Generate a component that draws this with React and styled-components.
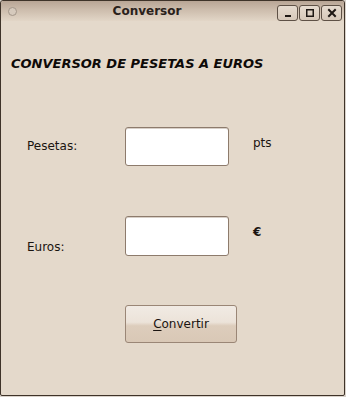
import React from "react";
import styled, { createGlobalStyle } from "styled-components";

const GlobalStyle = createGlobalStyle`
  html, body {
    margin: 0;
    padding: 0;
    background: #d9d2ca;
  }
  body {
    font-family: "DejaVu Sans", "Liberation Sans", sans-serif;
    font-size: 12px;
    color: #1a1410;
  }
`;

const Window = styled.div`
  width: 345px;
  height: 396px;
  box-sizing: border-box;
  border: 1px solid #3e3329;
  border-radius: 3px 3px 2px 2px;
  background-color: #e4d9cb;
  display: flex;
  flex-direction: column;
  overflow: hidden;
`;

const TitleBar = styled.div`
  height: 20px;
  flex-shrink: 0;
  display: flex;
  align-items: center;
  padding: 0 2px 0 7px;
  background: linear-gradient(#b8a595 0%, #cdbdad 45%, #e2d6c7 100%);
`;

const MenuDot = styled.span`
  width: 9px;
  height: 9px;
  box-sizing: border-box;
  border-radius: 50%;
  border: 1.5px solid #a39689;
  background: #d6cabd;
  margin-top: 1px;
`;

const Title = styled.div`
  flex: 1;
  text-align: center;
  font-weight: bold;
  font-size: 12px;
  color: #2a211b;
  margin-top: -1px;
`;

const Controls = styled.div`
  display: flex;
  gap: 1px;
  margin-top: 4px;
`;

const CtlButton = styled.div`
  width: 21px;
  height: 16px;
  box-sizing: border-box;
  border: 1px solid #5e5146;
  border-radius: 3px;
  background: linear-gradient(#e6dbcf, #d6c8b9);
  display: flex;
  align-items: center;
  justify-content: center;
`;

const Body = styled.div`
  flex: 1;
  display: flex;
  flex-direction: column;
  padding: 35px 0 0 10px;
`;

const Heading = styled.h1`
  margin: 0;
  font-size: 13px;
  font-weight: bold;
  font-style: italic;
  color: #0e0a08;
  line-height: 15px;
`;

const Row = styled.div`
  display: flex;
  align-items: flex-start;
  margin-top: ${(p) => p.gap}px;
  height: 39px;
`;

const Label = styled.div`
  width: 114px;
  padding-left: 16px;
  box-sizing: border-box;
  margin-top: ${(p) => p.offset}px;
  line-height: 14px;
`;

const Field = styled.input`
  width: 104px;
  height: ${(p) => p.h}px;
  box-sizing: border-box;
  border: 1px solid #8d7b6c;
  border-radius: 3px;
  background: #ffffff;
  box-shadow: inset 0 1px 0 #d8d0c8;
  margin: 0;
  padding: 0 4px;
  font: inherit;
  outline: none;
`;

const Unit = styled.div`
  margin-left: ${(p) => p.left}px;
  margin-top: ${(p) => p.offset}px;
  line-height: 14px;
  font-weight: ${(p) => (p.bold ? "bold" : "normal")};
`;

const ButtonRow = styled.div`
  display: flex;
  padding-left: 114px;
  margin-top: 50px;
`;

const Button = styled.button`
  width: 112px;
  height: 38px;
  box-sizing: border-box;
  border: 1px solid #9a8676;
  border-radius: 3px;
  background: linear-gradient(#f1ebe4 0%, #ece3d9 45%, #ddcdbc 55%, #d9c8b6 100%);
  font: inherit;
  color: #1a1410;
  padding: 0;
  cursor: pointer;
`;

const Mnemonic = styled.span`
  text-decoration: underline;
  text-underline-offset: 2px;
`;

export default function App() {
  return (
    <>
      <GlobalStyle />
      <Window>
        <TitleBar>
          <MenuDot />
          <Title>Conversor</Title>
          <Controls>
            <CtlButton>
              <svg width="10" height="10" viewBox="0 0 10 10">
                <rect x="2" y="7" width="6" height="2" fill="#1e1814" />
              </svg>
            </CtlButton>
            <CtlButton>
              <svg width="10" height="10" viewBox="0 0 10 10">
                <rect x="1.75" y="1.75" width="6.5" height="6.5" fill="none" stroke="#1e1814" strokeWidth="1.5" />
              </svg>
            </CtlButton>
            <CtlButton>
              <svg width="10" height="10" viewBox="0 0 10 10">
                <path d="M2 2 L8 8 M8 2 L2 8" stroke="#1e1814" strokeWidth="2" strokeLinecap="square" />
              </svg>
            </CtlButton>
          </Controls>
        </TitleBar>
        <Body>
          <Heading>CONVERSOR DE PESETAS A EUROS</Heading>
          <Row gap={56}>
            <Label offset={12}>Pesetas:</Label>
            <Field h={39} />
            <Unit left={24} offset={9}>pts</Unit>
          </Row>
          <Row gap={50}>
            <Label offset={24}>Euros:</Label>
            <Field h={40} />
            <Unit left={24} offset={9} bold>€</Unit>
          </Row>
          <ButtonRow>
            <Button>
              <Mnemonic>C</Mnemonic>onvertir
            </Button>
          </ButtonRow>
        </Body>
      </Window>
    </>
  );
}
